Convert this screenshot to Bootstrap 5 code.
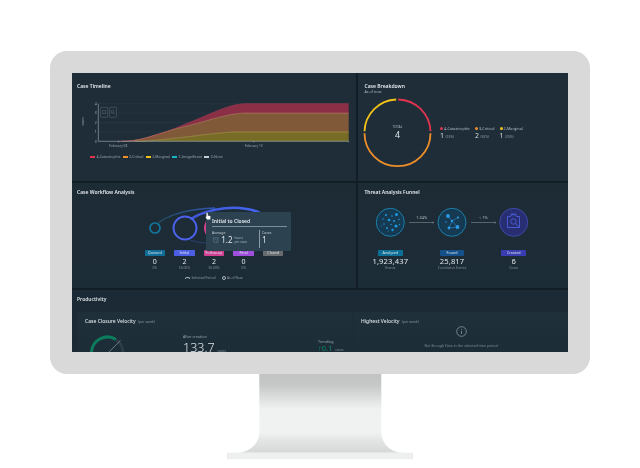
<!DOCTYPE html>
<html lang="en">
<head>
<meta charset="utf-8">
<title>Security dashboard on a monitor</title>
<link href="https://cdn.jsdelivr.net/npm/bootstrap@5.3.0/dist/css/bootstrap.min.css" rel="stylesheet">
<style>
html,body{background:#fff;margin:0;height:468px;overflow:hidden}
body{padding-top:51px;font-family:"Noto Sans","Liberation Sans",sans-serif}
.mon-frame{width:540px;height:323px;margin-left:50px;padding:22px;background:#d9d9d9;border-radius:17px}
.mon-screen{width:496px;height:279px;overflow:hidden;background:#131d25;filter:blur(.4px);display:grid;grid-template-columns:284px 210px;grid-template-rows:108px 105px 1fr;gap:2px}
.stand-art{display:block;width:186px;height:86px;margin-left:227px}
.pane{background:#1e2d38;position:relative;overflow:hidden;min-width:0}
.pane-soft{background:linear-gradient(180deg,#1d2b35,#1c2c37)}
.pane-wide{grid-column:1 / 3;background:#1b2a34}
.ttl{font-size:5px;line-height:6px;font-weight:600;color:#e4e9ec;white-space:nowrap}
.ttl-a{padding:10px 0 0 5px}
.ttl-b{padding:10px 0 0 6.5px}
.ttl-c{padding:6px 0 0 5px}
.ttl-d{padding:6px 0 0 6.5px}
.sub{font-size:3.7px;line-height:5px;color:#aeb8bf;padding-left:6.5px}
.plot{display:block}
.plot text{font-family:"Noto Sans","Liberation Sans",sans-serif}
.tl-plot{width:284px;height:58px;margin-top:4px}
.tl-legend{margin:3px 0 0 18px;gap:2.2px;font-size:3.5px;line-height:5px;color:#98a5ad;white-space:nowrap}
.swatch{display:inline-block;width:5px;height:1.2px;margin-right:1.5px;vertical-align:middle}
.c-red{background:#e0344f}.c-org{background:#ef8f2a}.c-yel{background:#f3c319}.c-teal{background:#12b5c9}.c-gray{background:#c5cdd2}
.bd-row{margin-top:-1px}
.bd-donut{width:78px;height:78px;flex:none}
.bd-legend{margin:3px 0 0 4px;gap:5px}
.bd-label{font-size:3.8px;line-height:5px;color:#b4bec5;white-space:nowrap}
.dot{display:inline-block;width:3px;height:3px;border-radius:50%;margin-right:1px;vertical-align:.1px}
.bd-val{font-size:7px;line-height:9px;color:#d5dce0}
.bd-val small{font-size:3.3px;color:#93a0a8;margin-left:1.5px}
.flow-plot{width:284px;height:50px;margin-top:4px}
.flow-row{margin:1px 0 0 68px;height:19.7px}
.flow-col{width:29.6px;text-align:center}
.tag{display:block;height:6.2px;line-height:6.2px;font-size:3.7px;color:#d8e1e8;border-radius:.7px;white-space:nowrap}
.flow-col .tag{width:20.4px;margin:0 auto}
.t-queued{background:#0f6d98}.t-initial{background:#4c5fe4}.t-follow{background:#d03f90}.t-final{background:#a04ede}.t-closed{background:#686c6f}
.t-analyzed{background:#0e6f96}.t-found{background:#14508a}.t-created{background:#3a3db2}
.big-num{font-size:7px;line-height:8px;margin-top:1.5px;color:#e2e7ea}
.tiny{font-size:3.3px;line-height:4px;color:#84929a;white-space:nowrap}
.flow-key{margin:5.8px 0 0 113px;gap:6px;font-size:3.3px;line-height:5px;color:#8f9ca4;white-space:nowrap}
.key-arc{display:inline-block;width:5px;height:2.5px;border:.5px solid #aab4ba;border-bottom:0;border-radius:3px 3px 0 0;margin-right:1.5px}
.key-ring{display:inline-block;width:4px;height:4px;border:.5px solid #aab4ba;border-radius:50%;margin-right:1.5px;vertical-align:-1px}
.tip{position:absolute;left:134px;top:28.7px;width:85px;height:39.5px;background:#2c4250;border-radius:1.5px;padding:6px 4px 0 6px;color:#e2e8ec}
.tip-ttl{font-size:5px;line-height:6px;font-weight:600;padding-bottom:2.5px;border-bottom:.6px solid #7c8e99;margin-right:.5px}
.tip-body{height:18px;margin-top:2.5px}
.tip-avg{width:47.5px;border-right:.6px solid #8c9ca6}
.tip-cap{font-size:3.5px;line-height:5px;color:#c3ccd2}
.tip-line{gap:1.8px;height:10px}
.tip-num{font-size:8px;line-height:10px;color:#dfe5e9}
.tip-note{font-size:3.2px;line-height:4px;color:#aab6bd}
.tip-clock{width:7.5px;height:7.5px;flex:none}
.tip-cases{padding-left:2.5px}
.cur{position:absolute;left:132.5px;top:29px;width:6px;height:8px}
.fn-plot{width:210px;height:53px;margin-top:4px}
.fn-row{margin:-2px 0 0 1.5px}
.fn-col{width:61.7px;text-align:center}
.fn-col .tag{width:24.6px;margin:0 auto}
.fn-col .big-num{font-size:7.6px;line-height:9px;margin-top:.6px;letter-spacing:.15px}
.prod-ttl{font-size:5px;line-height:6px;font-weight:600;color:#d9e0e4;padding:6px 0 0 5px}
.prod-row{margin:10.3px 0 0 5px;height:60px;gap:1px}
.prod-a,.prod-b{background:linear-gradient(180deg,#1f303b,#1b2b35)}
.prod-a{width:276px;padding:6px 0 0 8px;position:relative;flex:none}
.prod-b{flex:1;padding:6px 0 0 7px;position:relative}
.prod-head{font-size:5px;line-height:6px;color:#dbe2e6;white-space:nowrap;font-weight:500}
.prod-head small{font-size:3.5px;color:#869499;margin-left:1px;font-weight:400}
.velo-body{height:40px;margin-top:4px}
.velo-gauge{width:36px;height:22px;flex:none;margin:2px 0 0 3.5px}
.velo-main{margin:4.5px 0 0 58.5px;width:135px}
.velo-cap{font-size:3.7px;line-height:5px;color:#98a5ad}
.velo-big{font-size:12.5px;line-height:17px;color:#dde3e7;font-weight:300;white-space:nowrap}
.velo-big small,.velo-up small{font-size:3.3px;color:#7e8c94;margin-left:3px;font-weight:400}
.velo-trend{margin-top:10px;white-space:nowrap}
.velo-up{font-size:7.4px;line-height:9px;color:#0d8a64}
.nodata{margin:1px 0 0 0;text-align:center;padding-right:7px}
.nodata svg{display:block;width:11px;height:11px;margin:0 auto}
.nodata div{font-size:3.5px;line-height:5px;color:#7d8b93;margin-top:5.5px;white-space:nowrap}
</style>
</head>
<body>
<div class="mon-frame">
  <main class="mon-screen">

    <section class="pane">
      <div class="ttl ttl-a">Case Timeline</div>
      <svg class="plot tl-plot" viewBox="72 93 284 58" aria-label="Case timeline area chart">
        <g stroke="#33444f" stroke-width=".35" fill="none">
          <path d="M98.3 103.7H348.7M98.3 113.1H348.7M98.3 122.5H348.7M98.3 131.9H348.7"/>
          <path d="M118.3 103.7V141.3M253.7 103.7V141.3" stroke-dasharray="1 1"/>
        </g>
        <path d="M118 141.3C150 141.3 165 132 193 121C215 112 230 104 245 103.7H348.7V113.1H243C225 114 205 122 177 128.5C150 136 140 141.3 122 141.3Z" fill="#8a2f46"/>
        <path d="M122 141.3C140 141.3 150 136 177 128.5C205 122 225 114 243 113.1H348.7V132H233C215 133 195 136 177 138C160 140 148 141.3 135 141.3Z" fill="#805a38"/>
        <path d="M135 141.3C148 141.3 160 140 177 138C195 136 215 133 233 132H348.7V141.3Z" fill="#776c26"/>
        <g fill="none" stroke-width=".6">
          <path d="M118 141.3C150 141.3 165 132 193 121C215 112 230 104 245 103.7H348.7" stroke="#a83a52"/>
          <path d="M122 141.3C140 141.3 150 136 177 128.5C205 122 225 114 243 113.1H348.7" stroke="#c07c68"/>
          <path d="M135 141.3C148 141.3 160 140 177 138C195 136 215 133 233 132H348.7" stroke="#b59c50"/>
          <path d="M98.3 141.3H348.7M98.3 103.7V141.3" stroke="#aab5bb"/>
          <path d="M118.3 141.3v1.2M253.7 141.3v1.2M348.7 141.3v1.2" stroke="#aab5bb"/>
        </g>
        <g fill="none" stroke="#5d6e79" stroke-width=".5">
          <rect x="100.6" y="107.3" width="7" height="10" rx=".6"/>
          <rect x="109.4" y="107.3" width="7" height="10" rx=".6"/>
          <path d="M102.6 110.5h3v3h-3zM111.2 110.5h2.4v2.4h-2.4zM113.6 113l1 1"/>
        </g>
        <g font-size="3.4" fill="#aab5bb" text-anchor="end">
          <text x="96.6" y="105">4</text><text x="96.6" y="114.4">3</text><text x="96.6" y="123.8">2</text><text x="96.6" y="133.2">1</text><text x="96.6" y="142.6">0</text>
        </g>
        <text transform="translate(84 125.5) rotate(-90)" font-size="3.2" fill="#98a5ad">cases</text>
        <g font-size="3.2" fill="#98a5ad" text-anchor="middle">
          <text x="118.3" y="147">February 08</text><text x="253.7" y="147">February 13</text>
        </g>
      </svg>
      <div class="tl-legend d-flex">
        <span><i class="swatch c-red"></i>4-Catastrophic</span>
        <span><i class="swatch c-org"></i>3-Critical</span>
        <span><i class="swatch c-yel"></i>2-Marginal</span>
        <span><i class="swatch c-teal"></i>1-Insignificant</span>
        <span><i class="swatch c-gray"></i>0-None</span>
      </div>
    </section>

    <section class="pane">
      <div class="ttl ttl-b">Case Breakdown</div>
      <div class="sub">As of now</div>
      <div class="bd-row d-flex align-items-center">
        <svg class="plot bd-donut" viewBox="0 0 78 78" aria-label="Case breakdown donut">
          <g fill="none" stroke-width="1.8">
            <path d="M40.2 6.5A33 33 0 0 1 72.5 38.2" stroke="#e0344f"/>
            <path d="M72.5 40.2A33 33 0 0 1 6.5 40.2" stroke="#ef8f2a"/>
            <path d="M6.5 38.2A33 33 0 0 1 38.2 6.5" stroke="#f3c319"/>
          </g>
          <text x="39.5" y="34.5" font-size="3.4" fill="#aab5bb" text-anchor="middle">TOTAL</text>
          <text x="39.5" y="45.3" font-size="9" fill="#dde3e7" text-anchor="middle">4</text>
        </svg>
        <div class="bd-legend d-flex">
          <div><div class="bd-label"><i class="dot c-red"></i>4-Catastrophic</div><div class="bd-val">1<small>(25%)</small></div></div>
          <div><div class="bd-label"><i class="dot c-org"></i>3-Critical</div><div class="bd-val">2<small>(50%)</small></div></div>
          <div><div class="bd-label"><i class="dot c-yel"></i>2-Marginal</div><div class="bd-val">1<small>(25%)</small></div></div>
        </div>
      </div>
    </section>

    <section class="pane pane-soft">
      <div class="ttl ttl-c">Case Workflow Analysis</div>
      <svg class="plot flow-plot" viewBox="72 199 284 50" aria-label="Workflow diagram">
        <defs>
          <linearGradient id="arcA" x1="0" x2="1"><stop offset="0" stop-color="#2a6a8c" stop-opacity=".45"/><stop offset="1" stop-color="#2f55b8"/></linearGradient>
          <linearGradient id="arcB" x1="0" x2="1"><stop offset="0" stop-color="#3f55d8"/><stop offset="1" stop-color="#4468f4"/></linearGradient>
        </defs>
        <path d="M158 223C170 214 190 209 215 208" fill="none" stroke="url(#arcA)" stroke-width="1.6"/>
        <path d="M191 219C205 210 225 207 240 208C250 209 257 211 262 214" fill="none" stroke="url(#arcB)" stroke-width="2.6"/>
        <path d="M190 240C198 243 208 243 214 242" fill="none" stroke="#26406c" stroke-width="1.2"/>
        <circle cx="155" cy="228" r="5" fill="none" stroke="#14779f" stroke-width="1.7"/>
        <circle cx="185" cy="228" r="11.5" fill="none" stroke="#4c62ef" stroke-width="1.9"/>
        <circle cx="216.5" cy="228" r="11.5" fill="none" stroke="#d8408f" stroke-width="1.9"/>
      </svg>
      <div class="flow-row d-flex">
        <div class="flow-col"><span class="tag t-queued">Queued</span><div class="big-num">0</div><div class="tiny">0%</div></div>
        <div class="flow-col"><span class="tag t-initial">Initial</span><div class="big-num">2</div><div class="tiny">50.00%</div></div>
        <div class="flow-col"><span class="tag t-follow">Follow-up</span><div class="big-num">2</div><div class="tiny">50.00%</div></div>
        <div class="flow-col"><span class="tag t-final">Final</span><div class="big-num">0</div><div class="tiny">0%</div></div>
        <div class="flow-col"><span class="tag t-closed">Closed</span></div>
      </div>
      <div class="flow-key d-flex">
        <span><i class="key-arc"></i>Selected Period</span>
        <span><i class="key-ring"></i>As of Now</span>
      </div>
      <div class="tip">
        <div class="tip-ttl">Initial to Closed</div>
        <div class="tip-body d-flex">
          <div class="tip-avg">
            <div class="tip-cap">Average</div>
            <div class="tip-line d-flex align-items-center">
              <svg class="tip-clock" viewBox="0 0 16 16" fill="none" stroke="#7f93a0" stroke-width="1"><circle cx="8" cy="9" r="5.5"/><path d="M8 6v3.2l2 1.3M1.5 4.5 4 2M14.5 4.5 12 2"/></svg>
              <span class="tip-num">1.2</span>
              <span class="tip-note">hours<br>per case</span>
            </div>
          </div>
          <div class="tip-cases">
            <div class="tip-cap">Cases</div>
            <div class="tip-num">1</div>
          </div>
        </div>
      </div>
      <svg class="cur" viewBox="0 0 12 16" aria-hidden="true"><path d="M4 1c1 0 1.500.6 1.500 1.500V7l4 .8c1 .2 1.500.8 1.500 1.800L10.500 15H4L1 10l1 -.8 1 1V2.500C3 1.600 3.300 1 4 1Z" fill="#fff"/></svg>
    </section>

    <section class="pane pane-soft">
      <div class="ttl ttl-d">Threat Analysis Funnel</div>
      <svg class="plot fn-plot" viewBox="358 199 210 53" aria-label="Threat funnel">
        <defs>
          <marker id="ah" viewBox="0 0 6 6" refX="5" refY="3" markerWidth="4.5" markerHeight="4.5" orient="auto"><path d="M1 .5 5 3 1 5.500" fill="none" stroke="#7f8d95" stroke-width=".8"/></marker>
        </defs>
        <g fill="#163a52" stroke="#1f9fd6" stroke-width=".7">
          <circle cx="390.300" cy="222.300" r="14"/>
          <circle cx="452" cy="222.300" r="14"/>
        </g>
        <circle cx="513.700" cy="222.300" r="14" fill="#272e72" stroke="#4a54c8" stroke-width=".7"/>
        <g fill="none" stroke="#103a52" stroke-width=".7"><circle cx="390.300" cy="222.300" r="12.400"/><circle cx="452" cy="222.300" r="12.400"/></g>
        <g fill="#1c9ae0">
          <circle cx="386" cy="215" r="1"/><circle cx="392" cy="216" r=".8"/><circle cx="396.500" cy="214.500" r="1.500"/><circle cx="383" cy="219" r=".7"/>
          <circle cx="389" cy="220" r="1.300"/><circle cx="394" cy="221" r="1"/><circle cx="399" cy="219.500" r=".8"/><circle cx="384" cy="224" r=".8"/>
          <circle cx="391" cy="224.500" r=".7"/><circle cx="396" cy="226" r="1.600"/><circle cx="387" cy="228" r="1"/><circle cx="392.500" cy="230" r="1.200"/>
          <circle cx="399.500" cy="224.500" r=".7"/><circle cx="381.500" cy="226" r=".5"/><circle cx="388" cy="231" r=".5"/>
        </g>
        <g stroke="#2a8fd8" stroke-width=".6" fill="none"><path d="M448 216 452 221 458 217.500M452 221 449 228M452 221 457.500 227M449 228 457.500 227"/></g>
        <g fill="#2a9be6"><circle cx="448" cy="216" r="1.900"/><circle cx="458" cy="217.500" r="1.100"/><circle cx="452" cy="221" r="1.200"/><circle cx="449" cy="228" r="1.400"/><circle cx="457.500" cy="227" r="1.900"/><circle cx="446" cy="222" r=".7"/></g>
        <g fill="none" stroke="#4a5fd8" stroke-width=".9"><path d="M507.500 216.500h3l.8-1.700h4.400l.8 1.700h3v11h-12zM511 214.800v-.8h5v.8"/><circle cx="513.500" cy="221.500" r="2.700"/><path d="M515.500 223.500 519 227"/></g>
        <g stroke="#7f8d95" stroke-width=".6" marker-end="url(#ah)"><path d="M409 222.500H434"/><path d="M471 222.500H496"/></g>
        <g font-size="3.8" fill="#b6c0c6" text-anchor="middle"><text x="421.700" y="218.500">1.34%</text><text x="483.300" y="218.500">&lt; 1%</text></g>
      </svg>
      <div class="fn-row d-flex">
        <div class="fn-col"><span class="tag t-analyzed">Analyzed</span><div class="big-num">1,923,437</div><div class="tiny">Events</div></div>
        <div class="fn-col"><span class="tag t-found">Found</span><div class="big-num">25,817</div><div class="tiny">Correlation Events</div></div>
        <div class="fn-col"><span class="tag t-created">Created</span><div class="big-num">6</div><div class="tiny">Cases</div></div>
      </div>
    </section>

    <section class="pane pane-wide">
      <div class="prod-ttl">Productivity</div>
      <div class="prod-row d-flex">
        <div class="prod-a">
          <div class="prod-head">Case Closure Velocity <small>(per week)</small></div>
          <div class="velo-body d-flex">
            <svg class="plot velo-gauge" viewBox="0 0 36 22" aria-label="Velocity gauge">
              <path d="M2.500 21A16 16 0 0 1 27 8.500" fill="none" stroke="#0b7d5e" stroke-width="3"/>
              <path d="M27 8.500A16 16 0 0 1 34 21" fill="none" stroke="#2d3c46" stroke-width="3"/>
              <path d="M20 21 31.500 9.500" stroke="#b7c0c5" stroke-width=".5"/>
            </svg>
            <div class="velo-main">
              <div class="velo-cap">After creation</div>
              <div class="velo-big">133.7<small>cases</small></div>
            </div>
            <div class="velo-trend">
              <div class="velo-cap">Trending</div>
              <div class="velo-up">↑0.1<small>cases</small></div>
            </div>
          </div>
        </div>
        <div class="prod-b">
          <div class="prod-head">Highest Velocity <small>(per week)</small></div>
          <div class="nodata">
            <svg viewBox="0 0 16 16" fill="none" stroke="#a9b4ba" stroke-width=".9" aria-label="Information"><circle cx="8" cy="8" r="7"/><path d="M8 7v4.500M8 4.300v1.200"/></svg>
            <div>Not Enough Data in the selected time period</div>
          </div>
        </div>
      </div>
    </section>
  </main>
</div>
<svg class="stand-art" viewBox="0 0 186 86" aria-hidden="true">
  <defs>
    <linearGradient id="stem" x1="0" x2="0" y1="0" y2="1">
      <stop offset="0" stop-color="#c2c3c3"/><stop offset=".14" stop-color="#c6c7c7"/>
      <stop offset=".32" stop-color="#dfe0e0"/><stop offset=".45" stop-color="#f0f2f2"/>
      <stop offset=".74" stop-color="#f0f2f1"/><stop offset=".86" stop-color="#e2e3e3"/>
      <stop offset="1" stop-color="#d6d7d7"/>
    </linearGradient>
  </defs>
  <path d="M32.300 0H154.300V58C154.300 70 164 78.700 176 78.700H10C22 78.700 32.300 70 32.300 58Z" fill="url(#stem)"/>
  <rect y="78.700" width="186" height="6.600" fill="#eef0f0"/>
</svg>
<script src="https://cdn.jsdelivr.net/npm/bootstrap@5.3.0/dist/js/bootstrap.bundle.min.js"></script>
</body>
</html>
